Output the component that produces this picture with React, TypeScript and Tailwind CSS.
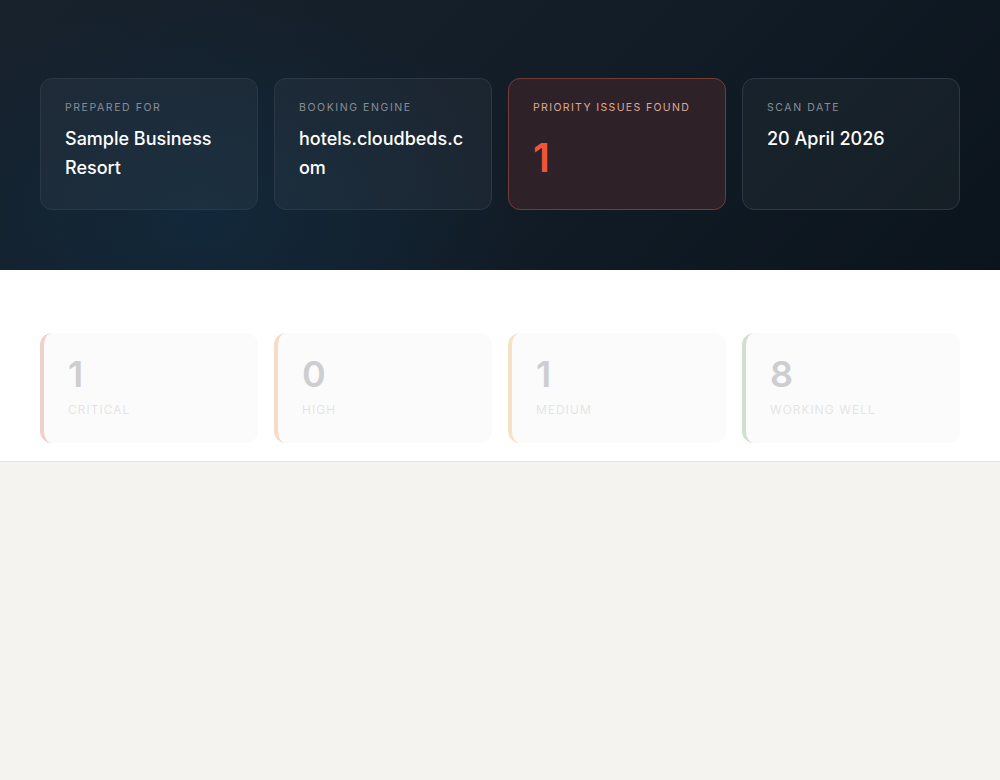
const heroCards = [
  { label: "PREPARED FOR", value: "Sample Business Resort" },
  { label: "BOOKING ENGINE", value: "hotels.cloudbeds.com" },
  { label: "PRIORITY ISSUES FOUND", value: "1", alert: true },
  { label: "SCAN DATE", value: "20 April 2026" },
];

const stats = [
  { count: "1", label: "CRITICAL", edge: "border-l-[#f2cfc8]" },
  { count: "0", label: "HIGH", edge: "border-l-[#f6dcc6]" },
  { count: "1", label: "MEDIUM", edge: "border-l-[#f5e4c3]" },
  { count: "8", label: "WORKING WELL", edge: "border-l-[#cfe0cf]" },
];

export default function App() {
  return (
    <main className="min-h-[780px] bg-[#f4f3ef] font-['Inter',sans-serif]">
      {/* Hero */}
      <section className="h-[270px] px-10 pt-[78px] bg-[radial-gradient(ellipse_320px_220px_at_200px_220px,#12283a_0%,rgba(18,40,58,0)_100%),linear-gradient(135deg,#18222d_0%,#121d28_50%,#0b141c_100%)]">
        <div className="grid grid-cols-4 gap-4">
          {heroCards.map((card) =>
            card.alert ? (
              <div key={card.label} className="h-[132px] rounded-xl border border-[#743c35] bg-[#2e2228] px-6 pt-[21px]">
                <p className="text-[10.5px] leading-4 tracking-[0.13em] text-[#dfa898]">{card.label}</p>
                <p className="mt-[18px] text-[40px] leading-[48px] font-semibold text-[#f0553a]">{card.value}</p>
              </div>
            ) : (
              <div key={card.label} className="h-[132px] rounded-xl border border-[#2c3945] bg-white/[0.04] px-6 pt-[21px]">
                <p className="text-[10.5px] leading-4 tracking-[0.15em] text-[#888e94]">{card.label}</p>
                <p className="mt-[8px] text-[18px] leading-[29px] font-medium text-white break-words">{card.value}</p>
              </div>
            )
          )}
        </div>
      </section>

      {/* Severity counts */}
      <section className="h-[192px] bg-white border-b border-[#e4e3df] px-10 pt-[63px]">
        <div className="grid grid-cols-4 gap-4">
          {stats.map((stat) => (
            <div key={stat.label} className={`h-[110px] rounded-xl border-l-4 bg-[#fbfbfb] pl-6 pt-[21px] ${stat.edge}`}>
              <p className="text-[36px] leading-[40px] font-semibold text-[#cdced1]">{stat.count}</p>
              <p className="mt-[8px] text-[12px] leading-4 tracking-[0.09em] font-light text-[#dfdfe1]">{stat.label}</p>
            </div>
          ))}
        </div>
      </section>
    </main>
  );
}
